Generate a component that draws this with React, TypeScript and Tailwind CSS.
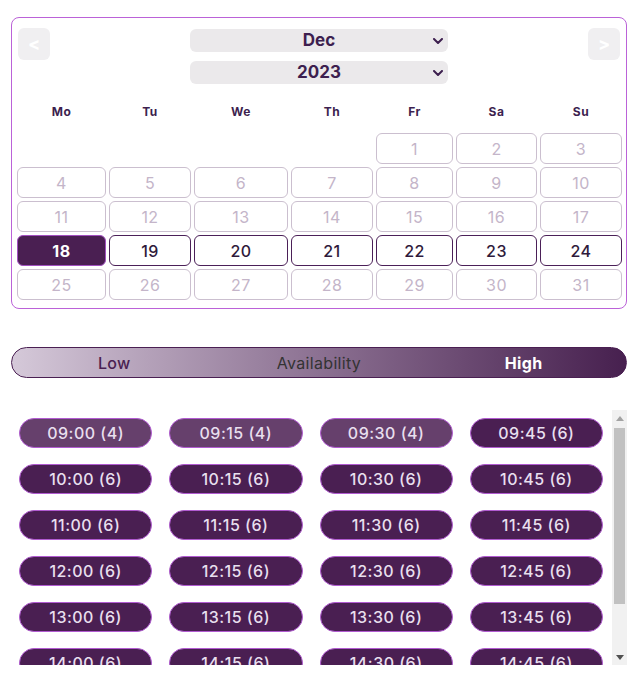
const days = [
  null, null, null, null, 1, 2, 3,
  4, 5, 6, 7, 8, 9, 10,
  11, 12, 13, 14, 15, 16, 17,
  18, 19, 20, 21, 22, 23, 24,
  25, 26, 27, 28, 29, 30, 31,
];

const weekdays = ["Mo", "Tu", "We", "Th", "Fr", "Sa", "Su"];

const slots: { time: string; count: number }[] = [];
for (let h = 9; h <= 15; h++) {
  for (const m of ["00", "15", "30", "45"]) {
    const time = `${String(h).padStart(2, "0")}:${m}`;
    slots.push({ time, count: h === 9 && m !== "45" ? 4 : 6 });
  }
}

function Chevron() {
  return (
    <svg viewBox="0 0 10 6" className="h-[6px] w-[10px]" fill="none">
      <path d="M1 1l4 4 4-4" stroke="#3d1f4f" strokeWidth="2" strokeLinecap="round" strokeLinejoin="round" />
    </svg>
  );
}

function Calendar() {
  return (
    <div className="rounded-lg border border-[#bb62d8] px-[5px] pt-[10px] pb-[8px]">
      {/* header: nav + selects */}
      <div className="flex items-start justify-between px-[1px]">
        <button className="flex h-8 w-8 items-center justify-center rounded-md bg-[#f0eff1] text-lg font-bold text-white">
          &lt;
        </button>
        <div className="mt-[1px] flex w-[258px] flex-col gap-[9px]">
          <div className="relative flex h-[23px] items-center justify-center rounded-md bg-[#ebe9eb] text-[17px] font-bold text-[#3d1f4f]">
            Dec
            <span className="absolute right-[5px] top-[9px]"><Chevron /></span>
          </div>
          <div className="relative flex h-[23px] items-center justify-center rounded-md bg-[#ebe9eb] text-[17px] font-bold text-[#3d1f4f]">
            2023
            <span className="absolute right-[5px] top-[9px]"><Chevron /></span>
          </div>
        </div>
        <button className="flex h-8 w-8 items-center justify-center rounded-md bg-[#f0eff1] text-lg font-bold text-white">
          &gt;
        </button>
      </div>

      {/* days grid */}
      <div className="mt-[20px] grid grid-cols-[89px_82px_94px_82px_77px_81px_82px] gap-[3px] tracking-[0.03em]">
        {weekdays.map((d) => (
          <div key={d} className="mb-[10px] text-center text-xs font-bold text-[#3d1f4f]">
            {d}
          </div>
        ))}
        {days.map((d, i) => {
          if (d === null) return <div key={i} className="h-[31px]" />;
          if (d === 18)
            return (
              <div key={i} className="flex h-[31px] items-center justify-center rounded-md border border-[#a24fc0] bg-[#4a1f52] text-[16px] font-bold text-white">
                {d}
              </div>
            );
          if (d > 18 && d <= 24)
            return (
              <div key={i} className="flex h-[31px] items-center justify-center rounded-md border border-[#4b2058] text-[16px] font-medium text-[#2f1a3b]">
                {d}
              </div>
            );
          return (
            <div key={i} className="flex h-[31px] items-center justify-center rounded-md border border-[#cbbfcf] text-[16px] text-[#c4b5c9]">
              {d}
            </div>
          );
        })}
      </div>
    </div>
  );
}

function AvailabilityBar() {
  return (
    <div className="mt-[38px] grid h-[31px] grid-cols-3 items-center rounded-full border border-[#4a1f52] bg-gradient-to-r from-[#d5c9d9] to-[#47204f] text-[16px] tracking-[0.02em]">
      <span className="text-center font-medium text-[#4a1f52]">Low</span>
      <span className="text-center text-[#333]">Availability</span>
      <span className="text-center font-bold text-white">High</span>
    </div>
  );
}

function FakeScrollbar() {
  return (
    <div className="flex w-[15px] shrink-0 flex-col bg-[#f1f1f1]">
      <div className="flex h-[16px] items-center justify-center">
        <svg viewBox="0 0 8 5" className="h-[5px] w-[8px]"><path d="M0 5L4 0L8 5Z" fill="#a3a3a3" /></svg>
      </div>
      <div className="mx-[2px] mt-[2px] h-[176px] bg-[#c1c1c1]" />
      <div className="flex-1" />
      <div className="flex h-[16px] items-center justify-center">
        <svg viewBox="0 0 8 5" className="h-[5px] w-[8px]"><path d="M0 0L4 5L8 0Z" fill="#505050" /></svg>
      </div>
    </div>
  );
}

function Slots() {
  return (
    <div className="mt-[32px] flex h-[255px]">
      <div className="flex-1 overflow-hidden">
        <div className="grid grid-cols-4">
          {slots.map((s) => (
            <div key={s.time} className="py-2 pl-2 pr-[9px]">
              <button
                className={
                  s.count === 4
                    ? "flex h-[30px] w-full items-center justify-center rounded-full border border-[#b15bd1] bg-[#66406c] text-[16px] font-medium tracking-[0.03em] text-[#e8dfee]"
                    : "flex h-[30px] w-full items-center justify-center rounded-full border border-[#b15bd1] bg-[#4a1f52] text-[16px] font-medium tracking-[0.03em] text-[#e8dfee]"
                }
              >
                {s.time} ({s.count})
              </button>
            </div>
          ))}
        </div>
      </div>
      <FakeScrollbar />
    </div>
  );
}

export default function App() {
  return (
    <div className="ml-[11px] mt-[17px] w-[616px] bg-white font-['Inter',sans-serif]">
      <Calendar />
      <AvailabilityBar />
      <Slots />
    </div>
  );
}
